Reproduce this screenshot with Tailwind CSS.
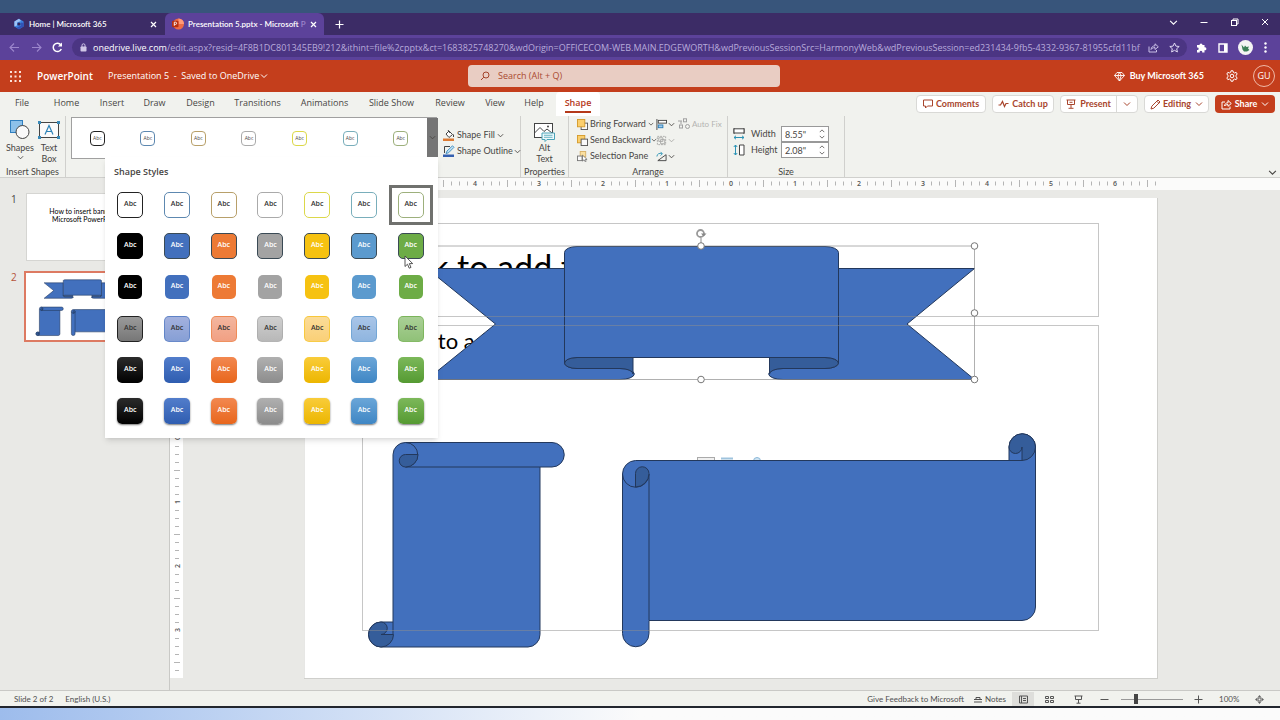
<!DOCTYPE html>
<html lang="en">
<head>
<meta charset="utf-8">
<title>Presentation 5.pptx - Microsoft PowerPoint</title>
<script src="https://cdn.jsdelivr.net/npm/@tailwindcss/browser@4"></script>
</head>
<body class="flex min-h-screen flex-col overflow-x-hidden bg-[#e9e9e6] font-['Open_Sans',sans-serif] text-[9px] leading-3 text-[#484644]">

<svg class="hidden" aria-hidden="true">
  <symbol id="chev" viewBox="0 0 8 8"><path d="M1 2.500 4 5.500 7 2.500" fill="none" stroke="currentColor" stroke-width="1"/></symbol>
  <symbol id="shapes-art" viewBox="304 198 854 481">
    <g fill="#4270bd" stroke="#23385c" stroke-linejoin="round">
      <path d="M393 454.500V622H381A12 12 0 0 0 381 647H528A12.500 12.500 0 0 0 540 634.500V467H552A12 12 0 0 0 552 442.500H405.500A12.300 12.300 0 0 0 393 454.500Z"/>
      <path d="M405.500 442.500A12 12 0 0 1 405.500 467H540" fill="none"/>
      <path d="M393 622V634.500" fill="none"/>
      <path fill="#355d9a" d="M418 454.500A12.300 12.300 0 0 1 405.500 467A6 6 0 0 1 405.500 454.500Z"/>
      <path fill="#355d9a" d="M381 622A12.500 12.500 0 1 0 393.500 634.500H381A6 6 0 0 0 381 622Z"/>
      <path d="M635.500 460.500H1009V447A13 13 0 0 1 1035.500 447V607A13.500 13.500 0 0 1 1022 620.500H649V633.500A13 13 0 0 1 622.500 633.500V474A13.500 13.500 0 0 1 635.500 460.500Z"/>
      <path fill="none" d="M622.500 474A13 13 0 0 0 649 474V620M1009 460.500H1022"/>
      <path fill="#355d9a" d="M635.500 487V473.500A6 6 0 0 1 649 473.500A13.500 13.500 0 0 1 635.500 487Z"/>
      <path fill="#355d9a" d="M1009 447A13 13 0 0 1 1035.500 447A13.500 13.500 0 0 1 1022 460.500V447A6 6 0 0 1 1009 447Z"/>
      <path d="M427 268.500H564.500V363A13 5.500 0 0 0 577 368.500H620A13 5 0 0 1 620 379.500H427L495.500 324Z"/>
      <path d="M974.500 268.500H838.500V363A13 5.500 0 0 1 825 368.500H783A13 5 0 0 0 783 379.500H974.500L907 324Z"/>
      <path fill="#355d9a" d="M577 357.500H633V374A13 5.500 0 0 0 620 368.500H577A12.500 5.500 0 0 1 577 357.500Z"/>
      <path fill="#355d9a" d="M825 357.500H769.500V374A13.500 5.500 0 0 1 783 368.500H825A13.500 5.500 0 0 0 825 357.500Z"/>
      <path d="M564.500 252.500A12.500 6 0 0 1 577 246.500H825A13.500 6 0 0 1 838.500 252.500V363A13.500 5.500 0 0 0 825 357.500H577A12.500 5.500 0 0 0 564.500 363Z"/>
    </g>
  </symbol>
</svg>

<div class="h-[13px] bg-[#38557b]"></div>

<!-- Browser tabs -->
<div class="flex h-[22px] items-end bg-[#3c2c66] text-white">
  <div class="flex h-[22px] w-[165px] items-center pl-[13px] pr-[6px]">
    <svg class="size-[12px]" viewBox="0 0 12 12"><path d="M6 .8 10.600 3.400V8.600L6 11.200 1.400 8.600V3.400Z" fill="#3b82e0"/><path d="M6 .8 1.400 3.400V8.600L4 7.500V4.500L8 3Z" fill="#9fc4f5"/><path d="M10.600 5V8.600L6 11.200 3.500 9.800 8 7.500V4.500Z" fill="#3153b8"/><circle cx="6" cy="6" r="1.600" fill="#33265c"/></svg>
    <span class="ml-1 flex-1 whitespace-nowrap font-['Lato',sans-serif] text-[8px] font-semibold">Home | Microsoft 365</span>
    <button aria-label="Close tab" class="flex size-3 items-center justify-center"><svg class="size-[7px]" viewBox="0 0 7 7"><path d="M1 1 6 6M6 1 1 6" stroke="#fff" stroke-width="1.200"/></svg></button>
  </div>
  <div class="flex h-[22px] w-[159px] items-center rounded-t-md bg-[#5c429a] pl-[7px] pr-[5px]">
    <svg class="size-[12px] shrink-0" viewBox="0 0 12 12"><circle cx="6.500" cy="6" r="5.500" fill="#ed6c47"/><path d="M6.500.5A5.500 5.500 0 0 1 12 6H6.500Z" fill="#ff9a78"/><rect y="2.800" width="6.500" height="6.500" rx="1" fill="#b7300f"/><path d="M2.300 7.800V4.200H3.500A1.100 1.100 0 0 1 3.500 6.400H2.300" stroke="#fff" stroke-width=".9" fill="none"/></svg>
    <span class="ml-1 whitespace-nowrap font-['Lato',sans-serif] text-[8px] font-semibold">Presentation 5.pptx - Microsoft <span class="text-[#9c86cc]">P</span></span>
    <button aria-label="Close tab" class="ml-auto flex size-3 items-center justify-center"><svg class="size-[7px]" viewBox="0 0 7 7"><path d="M1 1 6 6M6 1 1 6" stroke="#fff" stroke-width="1.200"/></svg></button>
  </div>
  <button aria-label="New tab" class="ml-[9px] flex h-[22px] w-3 items-center justify-center"><svg class="size-[9px]" viewBox="0 0 9 9"><path d="M4.500.5V8.500M.5 4.500H8.500" stroke="#fff" stroke-width="1.200"/></svg></button>
  <div class="ml-auto mb-[4px] flex h-[18px] items-center gap-[22px] pr-[11px]">
    <button aria-label="Search tabs"><svg class="size-[9px]" viewBox="0 0 8 8"><use href="#chev"/></svg></button>
    <button aria-label="Minimize"><svg class="size-[8px]" viewBox="0 0 8 8"><path d="M.5 4.500H7.500" stroke="#fff"/></svg></button>
    <button aria-label="Restore"><svg class="size-[9px]" viewBox="0 0 9 9" fill="none" stroke="#fff"><rect x="1.500" y="2.500" width="5" height="5"/><path d="M3 2.500V1H8V6H6.500"/></svg></button>
    <button aria-label="Close"><svg class="size-[8px]" viewBox="0 0 8 8"><path d="M1 1 7 7M7 1 1 7" stroke="#fff"/></svg></button>
  </div>
</div>

<!-- Address bar -->
<div class="flex h-[25px] items-center bg-[#5c429a] pl-[9px] pr-[5px] text-white">
  <button aria-label="Back" class="mr-[11px]"><svg class="size-[11px]" viewBox="0 0 11 11"><path d="M10 5.500H1.500M5 1.500 1 5.500 5 9.500" fill="none" stroke="#9c86cc" stroke-width="1.100"/></svg></button>
  <button aria-label="Forward" class="mr-[10px]"><svg class="size-[11px]" viewBox="0 0 11 11"><path d="M1 5.500H9.500M6 1.500 10 5.500 6 9.500" fill="none" stroke="#9c86cc" stroke-width="1.100"/></svg></button>
  <button aria-label="Reload" class="mr-[9px]"><svg class="size-[11px]" viewBox="0 0 11 11"><path d="M9.300 7A4.200 4.200 0 1 1 8.800 2.800" fill="none" stroke="#fff" stroke-width="1.500"/><path d="M10 .6V4.600H6Z" fill="#fff"/></svg></button>
  <div class="flex h-[19px] min-w-0 flex-1 items-center rounded-full bg-[#4b3583] pl-[8px] pr-[7px]">
    <svg class="mr-[6px] h-[9px] w-[7px] shrink-0" viewBox="0 0 7 9"><rect x=".5" y="3.500" width="6" height="5" rx=".8" fill="#cfc6e6"/><path d="M2 4V2.300A1.500 1.500 0 0 1 5 2.300V4" fill="none" stroke="#cfc6e6"/></svg>
    <span class="min-w-0 flex-1 whitespace-nowrap text-[#b8abdb]"><span class="text-white">onedrive.live.com</span>/edit.aspx?resid=4F8B1DC801345EB9!212&amp;ithint=file%2cpptx&amp;ct=1683825748270&amp;wdOrigin=OFFICECOM-WEB.MAIN.EDGEWORTH&amp;wdPreviousSessionSrc=HarmonyWeb&amp;wdPreviousSession=ed231434-9fb5-4332-9367-81955cfd11bf</span>
    <button aria-label="Share page" class="ml-[10px]"><svg class="size-[11px]" viewBox="0 0 11 11" fill="none" stroke="#c9bfe6"><path d="M1 4.500V10H8.500V8"/><path d="M3 7.500C3.300 5 5 3.800 7 3.800V1.800L10.300 4.800 7 7.500V5.600C5.200 5.600 4 6.200 3 7.500Z"/></svg></button>
    <button aria-label="Bookmark" class="ml-[10px]"><svg class="size-[11px]" viewBox="0 0 11 11"><path d="M5.500 1 6.900 4.100 10.200 4.500 7.700 6.700 8.400 10 5.500 8.300 2.600 10 3.300 6.700.8 4.500 4.100 4.100Z" fill="none" stroke="#e0d9f2"/></svg></button>
  </div>
  <div class="flex w-[88px] items-center justify-between pl-[9px] pr-[8px]">
    <button aria-label="Extensions"><svg class="size-[11px]" viewBox="0 0 11 11"><path d="M1 3H3.500A1.500 1.500 0 1 1 6.500 3H8.500V5.300A1.500 1.500 0 1 1 8.500 8.200V10.500H6.200A1.300 1.300 0 1 0 3.700 10.500H1V8A1.300 1.300 0 1 0 1 5.500Z" fill="#fff"/></svg></button>
    <button aria-label="Side panel"><svg class="size-[10px]" viewBox="0 0 10 10"><path d="M1 1H9V9H1Z" fill="none" stroke="#fff" stroke-width="1.400"/><path d="M6 1H9V9H6Z" fill="#fff"/></svg></button>
    <button aria-label="Profile"><svg class="size-[15px]" viewBox="0 0 15 15"><circle cx="7.500" cy="7.500" r="7.500" fill="#f4f4f4"/><path d="M3.500 4.500 6 7.500 7 5.500 8.500 7 11 6.500 10 8.500 11.500 10 9 11.500H6L4.500 9.500Z" fill="#3c8058"/></svg></button>
    <button aria-label="Menu"><svg class="h-[11px] w-[3px]" viewBox="0 0 3 11" fill="#fff"><circle cx="1.500" cy="1.500" r="1.200"/><circle cx="1.500" cy="5.500" r="1.200"/><circle cx="1.500" cy="9.500" r="1.200"/></svg></button>
  </div>
</div>

<!-- App header -->
<header class="grid h-8 grid-cols-[468px_312px_1fr] items-center bg-[#c43e1c] text-white">
  <div class="flex items-center pl-[10px]">
    <button aria-label="App launcher"><svg class="size-[11px]" viewBox="0 0 11 11" fill="#fbe3db"><path d="M0 0h2v2H0zM4.500 0h2v2h-2zM9 0h2v2H9zM0 4.500h2v2H0zM4.500 4.500h2v2h-2zM9 4.500h2v2H9zM0 9h2v2H0zM4.500 9h2v2h-2zM9 9h2v2H9z"/></svg></button>
    <span class="ml-4 w-[71px] text-[10px] font-semibold">PowerPoint</span>
    <button class="flex items-center whitespace-pre">Presentation 5  -  Saved to OneDrive<svg class="ml-px size-[8px]" viewBox="0 0 8 8"><use href="#chev"/></svg></button>
  </div>
  <label class="flex h-[22px] items-center rounded-sm bg-[#e9cdc3] pl-3">
    <svg class="mr-[8px] size-[10px]" viewBox="0 0 10 10" fill="none" stroke="#a3432a"><circle cx="6" cy="4" r="3"/><path d="M3.800 6.200 1 9"/></svg>
    <input aria-label="Search" placeholder="Search (Alt + Q)" class="w-48 bg-transparent outline-none placeholder:text-[#a94a30]">
  </label>
  <div class="flex items-center justify-end pr-[5px]">
    <button class="flex items-center font-['Lato',sans-serif] font-bold"><svg class="mr-[5px] size-[11px]" viewBox="0 0 11 11" fill="none" stroke="#fff" stroke-width=".9"><path d="M3 1.500H8L10.500 4.500 5.500 10 .5 4.500ZM.5 4.500H10.500M3.800 4.500 5.500 10 7.200 4.500 5.500 1.500Z"/></svg>Buy Microsoft 365</button>
    <button aria-label="Settings" class="ml-[22px]"><svg class="size-[12px]" viewBox="0 0 12 12" fill="none" stroke="#fff"><path d="M5 .8H7L7.300 2.300 8.700 3 10.100 2.300 11.200 4 10.100 5.200V6.800L11.200 8 10.100 9.700 8.700 9 7.300 9.700 7 11.200H5L4.700 9.700 3.300 9 1.900 9.700.8 8 1.900 6.800V5.200L.8 4 1.900 2.300 3.300 3 4.700 2.300Z"/><circle cx="6" cy="6" r="1.800"/></svg></button>
    <button class="ml-[15px] flex size-[22px] items-center justify-center rounded-full border border-[#f0b8a6]">GU</button>
  </div>
</header>

<!-- Ribbon tabs -->
<nav class="flex h-[24px] items-center bg-[#f1f2ee]">
  <div class="flex h-full items-stretch">
  <button class="w-[44px] pb-[2px]">File</button>
  <button class="w-[45px] pb-[2px]">Home</button>
  <button class="w-[46px] pb-[2px]">Insert</button>
  <button class="w-[39px] pb-[2px]">Draw</button>
  <button class="w-[53px] pb-[2px]">Design</button>
  <button class="w-[61px] pb-[2px]">Transitions</button>
  <button class="w-[73px] pb-[2px]">Animations</button>
  <button class="w-[61px] whitespace-nowrap pb-[2px]">Slide Show</button>
  <button class="w-[56px] pb-[2px]">Review</button>
  <button class="w-[34px] pb-[2px]">View</button>
  <button class="w-[44px] pb-[2px]">Help</button>
  <button class="flex w-[44px] flex-col items-center justify-end rounded-t bg-white pb-[3px] font-semibold text-[#b5391a]"><span class="h-4 border-b-2 border-[#b5391a]">Shape</span></button>
  </div>
  <div class="ml-auto flex h-[18px] items-stretch gap-[6px] pr-[5px] font-['Lato',sans-serif] font-bold text-[#a8452c]">
    <button class="flex w-[70px] items-center justify-center rounded-sm border border-[#d9d9d6] bg-white"><svg class="mr-[3px] size-[10px]" viewBox="0 0 10 10"><path d="M.5 1H9.500V7H4.500L2.500 9V7H.5Z" fill="none" stroke="currentColor"/></svg>Comments</button>
    <button class="flex w-[62px] items-center justify-center rounded-sm border border-[#d9d9d6] bg-white"><svg class="mr-[3px] h-[8px] w-[11px]" viewBox="0 0 11 8"><path d="M.5 5H2.500L4.500 1.500 6.500 6.500 8 3.500H10.500" fill="none" stroke="currentColor" stroke-width="1.200"/></svg>Catch up</button>
    <div class="flex w-[78px] rounded-sm border border-[#d9d9d6] bg-white">
      <button class="flex flex-1 items-center justify-center border-r border-[#d9d9d6]"><svg class="mr-[4px] size-[10px]" viewBox="0 0 10 10" fill="none" stroke="currentColor"><path d="M.5 1H9.500M1.500 1V5.500H8.500V1M5 5.500V9M2.500 9.300H7.500M3.500 3.300H6.500"/></svg>Present</button>
      <button aria-label="Present options" class="flex w-5 items-center justify-center"><svg class="size-[8px]" viewBox="0 0 8 8"><use href="#chev"/></svg></button>
    </div>
    <button class="flex w-[65px] items-center justify-center rounded-sm border border-[#d9d9d6] bg-white"><svg class="mr-[2px] size-[11px]" viewBox="0 0 11 11"><path d="M1 10 1.800 7.200 8 1 10 3 3.800 9.200ZM6.800 2.200 8.800 4.200" fill="none" stroke="currentColor"/></svg>Editing<svg class="ml-[4px] size-[8px]" viewBox="0 0 8 8"><use href="#chev"/></svg></button>
    <button class="flex w-[60px] items-center justify-center rounded-sm bg-[#c43e1c] text-white"><svg class="mr-[3px] size-[11px]" viewBox="0 0 11 11" fill="none" stroke="#fff"><path d="M4 3H1V10H9V7.500"/><path d="M3.500 7C3.800 4.800 5 3.800 7 3.800V1.500L10.300 4.500 7 7.300V5.600C5.300 5.600 4.300 6 3.500 7Z"/></svg>Share<svg class="ml-[4px] size-[8px]" viewBox="0 0 8 8"><use href="#chev"/></svg></button>
  </div>
</nav>

<!-- Ribbon body -->
<section class="relative flex h-[62px] border-b border-[#d0d0cd] bg-[#f1f2ee] font-['Lato',sans-serif]">
  <div class="flex w-[66px] flex-col justify-between border-r border-[#d0d0cd] pt-[4px]">
    <div class="flex gap-[4px] pl-[6px]">
      <button class="flex flex-col items-center"><svg class="h-[20px] w-[20px]" viewBox="0 0 20 20"><rect x=".5" y=".5" width="12" height="12" fill="#8cc1ea" stroke="#2f7fc0"/><circle cx="12.500" cy="12" r="6.500" fill="#fafafa" stroke="#444"/></svg><span class="mt-[2px]">Shapes</span><svg class="size-[7px]" viewBox="0 0 8 8"><use href="#chev"/></svg></button>
      <button class="flex flex-col items-center leading-[11px]"><svg class="h-[20px] w-[22px]" viewBox="0 0 22 20"><rect x="1.500" y="2.500" width="19" height="15" fill="#fafafa" stroke="#444"/><path d="M0 1h3v3H0zM19 1h3v3h-3zM0 16h3v3H0zM19 16h3v3h-3z" fill="#3a8ab8"/><path d="M7 14.500 11 5.500 15 14.500M8.300 11.500H13.700" fill="none" stroke="#2d83b8" stroke-width="1.200"/></svg><span class="mt-[2px]">Text<br>Box</span></button>
    </div>
    <div class="whitespace-nowrap text-center leading-[10px]">Insert Shapes</div>
  </div>
  <div id="gallery" class="ml-[5px] mt-[1px] grid h-[42px] w-[366px] grid-cols-7 items-center border border-[#a0a0a0] bg-white pr-[10px] font-['Open_Sans',sans-serif]"></div>
  <div class="flex w-[84px] flex-col gap-[4px] border-r border-[#d0d0cd] pl-[6px] pt-[13px]">
    <button class="flex items-center whitespace-nowrap"><svg class="mr-[2px] size-[12px] shrink-0" viewBox="0 0 12 12"><path d="M3 5 6 2 9.500 5.500 6 8.500Z" fill="#fff" stroke="#444"/><path d="M5 1 7 4M10.500 5.500V8" stroke="#444" fill="none"/><path d="M0 9.500H11V12H0Z" fill="#dd7a33"/></svg>Shape Fill<svg class="ml-[2px] size-[7px]" viewBox="0 0 8 8"><use href="#chev"/></svg></button>
    <button class="flex items-center whitespace-nowrap"><svg class="mr-[2px] size-[12px] shrink-0" viewBox="0 0 12 12"><path d="M7 1.500H1.500V8" fill="none" stroke="#444"/><path d="M3 8.500 4 6 9.500.8 11 2.300 5.500 7.800Z" fill="#bfe0f5" stroke="#2980b9" stroke-width=".8"/><path d="M0 9.500H11V12H0Z" fill="#3560b0"/></svg>Shape Outline<svg class="ml-[1px] size-[7px] shrink-0" viewBox="0 0 8 8"><use href="#chev"/></svg></button>
  </div>
  <div class="flex w-[48px] flex-col items-center justify-between border-r border-[#d0d0cd] pt-[6px]">
    <button class="flex flex-col items-center leading-[11px]"><svg class="h-[20px] w-[21px]" viewBox="0 0 21 20"><rect x=".5" y="1.500" width="18" height="14" fill="#fff" stroke="#444"/><path d="M.5 11 6 5.500 10 9.500 13 7 18 11" fill="none" stroke="#444"/><circle cx="14" cy="4.500" r="1" fill="#444"/><path d="M8 11H20.500V17.500H13L11 19.500V17.500H8Z" fill="#eef8fb" stroke="#4aa3b8"/><path d="M10 13.300H18.500M10 15.300H18.500" stroke="#4aa3b8" stroke-width=".8"/></svg><span>Alt<br>Text</span></button>
    <div class="leading-[10px]">Properties</div>
  </div>
  <div class="flex w-[159px] flex-col justify-between border-r border-[#d0d0cd] pl-[8px]">
    <div class="flex">
      <div class="flex w-[79px] flex-col">
        <button class="flex h-4 items-center whitespace-nowrap"><svg class="mr-[2px] size-[11px] shrink-0" viewBox="0 0 12 12"><rect x="4.500" y="4.500" width="7" height="7" fill="#fafafa" stroke="#555"/><rect x=".5" y=".5" width="8" height="8" fill="#fbcf6d" stroke="#d49a2a"/></svg>Bring Forward<svg class="ml-[2px] size-[6px] shrink-0" viewBox="0 0 8 8"><use href="#chev"/></svg></button>
        <button class="flex h-4 items-center whitespace-nowrap"><svg class="mr-[2px] size-[11px] shrink-0" viewBox="0 0 12 12"><rect x=".5" y=".5" width="8" height="8" fill="#fbcf6d" stroke="#d49a2a"/><rect x="4.500" y="4.500" width="7" height="7" fill="#fafafa" stroke="#555"/></svg>Send Backward<svg class="size-[6px] shrink-0" viewBox="0 0 8 8"><use href="#chev"/></svg></button>
        <button class="flex h-4 items-center whitespace-nowrap"><svg class="mr-[2px] size-[11px] shrink-0" viewBox="0 0 12 12"><rect x="3.500" y=".5" width="6" height="6" fill="#fbe0a0" stroke="#d8b066"/><rect x=".5" y="5.500" width="5" height="5" fill="#fafafa" stroke="#777"/><path d="M6 4.500V11L7.700 9.600 9 11.800 10 11.200 8.900 9.200H11Z" fill="#fff" stroke="#555" stroke-width=".7"/></svg>Selection Pane</button>
      </div>
      <div class="flex flex-col">
        <button class="flex h-4 items-center" aria-label="Align"><svg class="size-[11px]" viewBox="0 0 12 12"><path d="M1 0V12" stroke="#444"/><rect x="2.500" y="1.500" width="9" height="3" fill="#fff" stroke="#444"/><rect x="2.500" y="6.500" width="5" height="3" fill="#9fcdf0" stroke="#2b7cb5"/></svg><svg class="ml-px size-[7px]" viewBox="0 0 8 8"><use href="#chev"/></svg></button>
        <button class="flex h-4 items-center text-[#a8a8a6]" aria-label="Group"><svg class="size-[11px]" viewBox="0 0 12 12" fill="none" stroke="currentColor"><rect x="1.500" y="1.500" width="9" height="9" stroke-dasharray="2 1"/><path d="M3 3H7.500V7H3ZM5 5H9.500V9.500H5Z"/></svg><svg class="ml-px size-[7px]" viewBox="0 0 8 8"><use href="#chev"/></svg></button>
        <button class="flex h-4 items-center" aria-label="Rotate"><svg class="size-[11px]" viewBox="0 0 12 12" fill="none"><path d="M2 10.500H11V4Z" stroke="#444"/><path d="M1 6C1 3 4 2 6.500 3M5 1 7 3 5 5" stroke="#2b93b5"/></svg><svg class="ml-px size-[7px]" viewBox="0 0 8 8"><use href="#chev"/></svg></button>
      </div>
      <button disabled class="ml-[3px] flex h-4 items-center whitespace-nowrap text-[8px] text-[#b4b4b2]"><svg class="mr-[2px] size-[12px] shrink-0" viewBox="0 0 12 12" fill="none" stroke="#a0a0a0"><rect x="5.500" y=".8" width="3" height="3"/><rect x="1.500" y="7" width="3" height="3"/><rect x="7.500" y="6.500" width="4" height="4" rx="2"/><path d="M0 3H4M3 3V6"/></svg>Auto Fix</button>
    </div>
    <div class="pr-[8px] text-center leading-[10px]">Arrange</div>
  </div>
  <div class="flex w-[117px] flex-col justify-between border-r border-[#d0d0cd] pt-[10px]">
    <div class="flex flex-col pl-[5px]">
      <label class="flex h-4 items-center"><svg class="mr-[6px] size-[12px]" viewBox="0 0 12 12" fill="none"><path d="M1 0V6M11 0V6" stroke="#444"/><path d="M1 .8H11V5H1Z" fill="#fff" stroke="#444"/><path d="M1 9.500H11M3 7.800 1 9.500 3 11.200M9 7.800 11 9.500 9 11.200" stroke="#2b93b5"/></svg><span class="w-[30px]">Width</span><input value="8.55&quot;" class="h-4 w-[34px] border border-r-0 border-[#999] bg-white pl-[3px]"><span class="flex h-4 w-[14px] flex-col items-center justify-center border border-l-0 border-[#999] bg-white"><svg class="size-[6px] rotate-180" viewBox="0 0 8 8"><use href="#chev"/></svg><svg class="size-[6px]" viewBox="0 0 8 8"><use href="#chev"/></svg></span></label>
      <label class="flex h-4 items-center"><svg class="mr-[6px] size-[12px]" viewBox="0 0 12 12" fill="none"><path d="M6.500 1H11V11H6.500Z" fill="#fff" stroke="#444"/><path d="M2.500 1V11M.8 3 2.500 1 4.200 3M.8 9 2.500 11 4.200 9" stroke="#2b93b5"/></svg><span class="w-[30px]">Height</span><input value="2.08&quot;" class="h-4 w-[34px] border border-r-0 border-[#999] bg-white pl-[3px]"><span class="flex h-4 w-[14px] flex-col items-center justify-center border border-l-0 border-[#999] bg-white"><svg class="size-[6px] rotate-180" viewBox="0 0 8 8"><use href="#chev"/></svg><svg class="size-[6px]" viewBox="0 0 8 8"><use href="#chev"/></svg></span></label>
    </div>
    <div class="text-center leading-[10px]">Size</div>
  </div>
  <button aria-label="Collapse ribbon" class="ml-auto self-end pr-[3px]"><svg class="size-[9px]" viewBox="0 0 8 8"><use href="#chev"/></svg></button>

  <!-- Gallery flyout, over the slide area -->
  <button aria-label="More styles" class="absolute left-[427px] top-[2px] z-20 flex h-[39px] w-[11px] items-center justify-center bg-[#757575]"><svg class="size-[7px]" viewBox="0 0 8 8"><use href="#chev"/></svg></button>
  <div class="absolute left-[105px] top-[41px] z-10 w-[333px] bg-white pb-[6px] pl-[2px] pr-[4px] font-['Open_Sans',sans-serif] shadow-md">
    <h2 class="pl-[7px] pt-[9px] text-[9px] font-semibold leading-3">Shape Styles</h2>
    <div id="styles" class="mt-[6px] grid h-[248px] grid-cols-7 grid-rows-6 place-items-center"></div>
    <svg class="absolute left-[299px] top-[98px] h-[15px] w-[10px]" viewBox="0 0 10 15"><path d="M1 1V11.500L3.500 9.200 5.200 13.200 7 12.400 5.300 8.600H8.700Z" fill="#fff" stroke="#444" stroke-width=".9"/></svg>
  </div>
</section>

<!-- Work area -->
<main class="flex flex-1">
  <aside class="flex w-[170px] flex-col gap-[10px] border-r border-[#c9c9c6] pt-[15px]">
    <div class="flex"><span class="w-[26px] pl-[11px] text-[10px]">1</span>
      <div class="h-[68px] w-[119px] border border-[#d5d5d2] bg-white pt-[13px] text-center font-['Lato',sans-serif] text-[7px] leading-[8px] text-black">How to insert banner in<br>Microsoft PowerPoint</div></div>
    <div class="flex"><span class="w-[24px] pl-[11px] text-[10px] text-[#b5533a]">2</span>
      <div class="h-[71px] w-[123px] border-2 border-[#dd7a62] bg-white"><svg class="h-[67px] w-[119px]" viewBox="-1 0 119 67"><use href="#shapes-art" width="119" height="67" stroke-width="4"/></svg></div></div>
  </aside>
  <div class="flex min-w-0 flex-1 flex-col">
    <div class="flex h-[12px] justify-center bg-[#fbfbfa] pl-[13px] pr-px">
      <svg id="hruler" class="h-[12px] w-[854px]" viewBox="304 0 854 12"></svg>
    </div>
    <div class="flex flex-1 pt-[8px]">
      <svg id="vruler" class="-mt-[8px] h-[488px] w-[13px] bg-white" viewBox="0 190 13 488"></svg>
      <div class="flex flex-1 justify-center pb-[11px] pr-px">
        <svg class="h-[481px] w-[854px]" viewBox="304 198 854 481">
          <rect x="304" y="197.500" width="853.500" height="481" fill="#fff" stroke="#cfcfcc"/>
          <g font-family="Lato, sans-serif" fill="#000"><text x="376" y="280" font-size="34">Click to add title</text><text x="367" y="349" font-size="22">• Click to add text</text></g>
          <g fill="#f0f0f0" stroke="#aaa"><rect x="697.500" y="457.500" width="17" height="8"/><path d="M721 458.500H733" stroke="#9ec3dd" stroke-width="2"/><circle cx="757" cy="461" r="3.500" fill="#cfe3f2" stroke="#8ab8d8"/></g>
          <use href="#shapes-art" x="304" y="198" width="854" height="481"/>
          <g fill="none" stroke="#8e8e8e" opacity=".5"><rect x="362.500" y="223.500" width="736" height="93"/><rect x="362.500" y="325.500" width="736" height="305"/></g>
          <g fill="none" stroke="#8e8e8e"><path d="M427 246H974.500V379.500H427" opacity=".7"/><path d="M701 238V246"/></g>
          <g fill="#fff" stroke="#777"><circle cx="701" cy="246" r="3.300"/><circle cx="974.500" cy="246" r="3.300"/><circle cx="974.500" cy="313" r="3.300"/><circle cx="974.500" cy="379.500" r="3.300"/><circle cx="701" cy="379.500" r="3.300"/></g>
          <circle cx="700.500" cy="233.500" r="3.500" fill="#fff" stroke="#999" stroke-width="1.800"/><path d="M701 233.500H706.500L703.700 236.500Z" fill="#888"/>
        </svg>
      </div>
    </div>
  </div>
</main>

<!-- Status bar -->
<footer class="flex h-[18px] items-center border-b-2 border-t border-b-[#22262e] border-t-[#c9c9c6] bg-[#f1f2ee] pl-[14px] pr-[16px] pt-px font-['Lato',sans-serif] text-[8px] text-[#505050]">
  <span>Slide 2 of 2</span><span class="ml-3">English (U.S.)</span>
  <a href="#feedback" class="ml-auto">Give Feedback to Microsoft</a>
  <button class="ml-[9px] flex items-center"><svg class="mr-[2px] size-[10px]" viewBox="0 0 10 10"><path d="M1 5.500H9M1 8H9M3 5.500V3.500H7V5.500" fill="none" stroke="currentColor"/></svg>Notes</button>
  <button aria-label="Normal view" class="ml-[6px] flex h-[14px] w-[22px] items-center justify-center bg-[#dededb]"><svg class="size-[9px]" viewBox="0 0 9 9" fill="none" stroke="#555"><path d="M.5 1H8.500V8H.5ZM2.500 1V8M4 3.500H7M4 5.500H7"/></svg></button>
  <button aria-label="Slide sorter" class="ml-[11px]"><svg class="size-[9px]" viewBox="0 0 9 9" fill="none" stroke="#555"><path d="M.5 1.500H3.500V3.500H.5ZM5.500 1.500H8.500V3.500H5.500ZM.5 5.500H3.500V7.500H.5ZM5.500 5.500H8.500V7.500H5.500Z"/></svg></button>
  <button aria-label="Slide show" class="ml-[20px]"><svg class="size-[9px]" viewBox="0 0 9 9" fill="none" stroke="#555"><path d="M.5 1H8.500M1.500 1V4.500H7.500V1M4.500 4.500V8M2.500 8.200H6.500"/></svg></button>
  <button aria-label="Zoom out" class="ml-[17px]"><svg class="size-[9px]" viewBox="0 0 9 9"><path d="M.5 4.500H8.500" stroke="#555"/></svg></button>
  <input type="range" aria-label="Zoom" min="10" max="400" value="96" class="ml-[12px] h-[11px] w-[62px] appearance-none bg-[linear-gradient(#999,#999)] bg-[length:100%_1px] bg-center bg-no-repeat [&::-webkit-slider-thumb]:h-[10px] [&::-webkit-slider-thumb]:w-[4px] [&::-webkit-slider-thumb]:appearance-none [&::-webkit-slider-thumb]:bg-[#444]">
  <button aria-label="Zoom in" class="ml-[11px]"><svg class="size-[9px]" viewBox="0 0 9 9"><path d="M.5 4.500H8.500M4.500.5V8.500" stroke="#555"/></svg></button>
  <span class="ml-[16px] w-[22px]">100%</span>
  <button aria-label="Fit to window" class="ml-[14px]"><svg class="size-[9px]" viewBox="0 0 9 9"><path d="M4.500 0 6.300 2.200H2.700ZM4.500 9 2.700 6.800H6.300ZM0 4.500 2.200 2.700V6.300ZM9 4.500 6.800 6.300V2.700Z" fill="#666"/><rect x="3" y="3" width="3" height="3" fill="none" stroke="#666"/></svg></button>
</footer>
<div class="h-[12px] bg-linear-to-r from-[#9dbcec] via-[#fbfbfb] via-50% to-[#fbfbfb]"></div>

<script>
  const line = ['#222', '#5d88b0', '#b8a06a', '#aaa', '#dcd84a', '#79aebb', '#9db07c'];
  const base = ['#000000', '#4270bd', '#ed7a35', '#a3a3a3', '#f6c211', '#5b9ace', '#6dac46'];
  const soft = [['#9a9a9a','#777'], ['#a3b1de','#869fd5'], ['#f3b69f','#f1a083'], ['#cfcfcf','#b8b8b8'], ['#fbdc98','#fad077'], ['#a9c5e8','#8fb5df'], ['#aad096','#90c178']];
  const deep = ['#000', '#2f5db0', '#e8661c', '#8c8c8c', '#ecb600', '#3f86c4', '#559a32'];
  const top2 = ['#2b2b2b', '#527dcb', '#f28850', '#b0b0b0', '#f9cc3a', '#6ba6d8', '#7cb85a'];
  const cell = 'flex size-[26px] items-center justify-center rounded-[5px] border pb-[2px] text-[7px] font-semibold leading-3';
  const css = (r, c) => [
    `background:#fff;border-color:${line[c]};color:#333`,
    `background:${base[c]};border-color:${c ? '#3a4a55' : '#000'};color:#fff`,
    `background:${base[c]};border:0;width:24px;height:24px;color:#fff`,
    `background:linear-gradient(${soft[c][0]},${soft[c][1]});border-color:${c ? base[c] + '99' : '#222'};color:#333`,
    `background:linear-gradient(${top2[c]},${deep[c]});border:0;color:#fff`,
    `background:linear-gradient(${top2[c]},${deep[c]});border:0;color:#fff;box-shadow:0 1px 2px #0008`
  ][r];
  let out = '';
  for (let r = 0; r < 6; r++) for (let c = 0; c < 7; c++) {
    const b = `<button class="${cell}" style="${css(r, c)}">Abc</button>`;
    out += r === 0 && c === 6 ? `<div class="flex h-[40px] w-[44px] items-center justify-center border-[3px] border-[#70716e]">${b}</div>` : b;
  }
  document.getElementById('styles').innerHTML = out;
  document.getElementById('gallery').innerHTML = line.map(l => `<button class="flex size-[15px] items-center justify-center justify-self-center rounded-sm border text-[5px] leading-none" style="border-color:${l}">Abc</button>`).join('');

  let h = '', v = '';
  for (let i = -53; i <= 53; i++) {
    const x = 731 + i * 8;
    if (i % 8 === 0) h += `<text x="${x}" y="8" text-anchor="middle" font-size="7" font-weight="600" fill="#555">${Math.abs(i / 8)}</text>`;
    else h += `<path d="M${x}.500 ${i % 4 ? '3.500V7.500' : '2V9'}" stroke="#b5b5b5"/>`;
  }
  for (let i = -30; i <= 29; i++) {
    const y = 438 + i * 8;
    if (i % 8 === 0) v += `<text transform="translate(10 ${y}) rotate(-90)" text-anchor="middle" font-size="7" font-weight="600" fill="#555">${Math.abs(i / 8)}</text>`;
    else v += `<path d="M${i % 4 ? '5' : '4'} ${y}.500H${i % 4 ? '9' : '10'}" stroke="#b5b5b5"/>`;
  }
  document.getElementById('hruler').innerHTML = h;
  document.getElementById('vruler').innerHTML = v;
</script>
</body>
</html>
